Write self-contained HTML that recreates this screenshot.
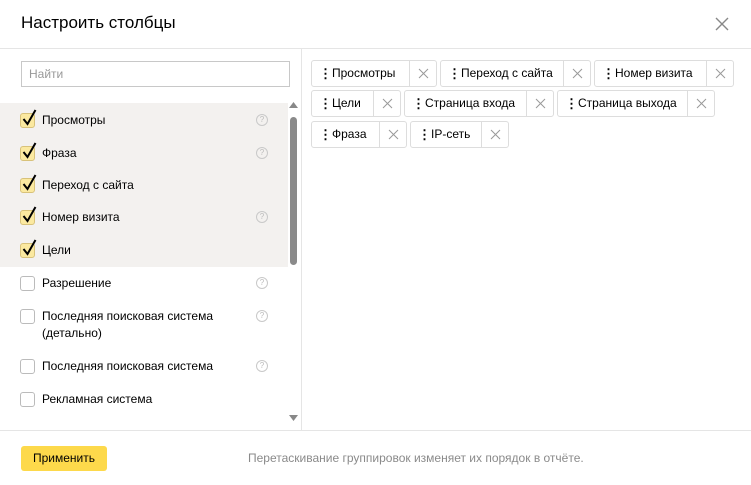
<!DOCTYPE html>
<html><head><meta charset="utf-8"><style>
*{box-sizing:border-box;margin:0;padding:0}
body{width:751px;height:485px;background:#fff;font-family:"Liberation Sans",sans-serif;position:relative;overflow:hidden;color:#000}
.abs{position:absolute}
.title{left:21px;top:13px;font-size:17px}
.close{left:714px;top:16px}
.hl{left:0;top:48px;width:751px;height:1px;background:#e5e5e5}
.vl{left:301px;top:48px;width:1px;height:382px;background:#e5e5e5}
.fl{left:0;top:430px;width:751px;height:1px;background:#e5e5e5}
.search{left:21px;top:61px;width:269px;height:26px;border:1px solid #c8c8c8;font-size:12px;color:#999;padding:5px 7px}
.sel{left:0;top:103px;width:288px;height:164px;background:#f3f1ef}
.row{position:absolute;left:20px;font-size:12px;line-height:17px}
.cb{position:absolute;left:0;top:1px;width:15px;height:15px;border:1px solid #bbb;border-radius:3px;background:#fff}
.cb.on{background:#fbe9a0;border-color:#d8c27a}
.row span.t{position:absolute;left:22px;top:0;white-space:nowrap}
.q{position:absolute;left:236px;top:2px;width:12px;height:12px;border:1px solid #c9c9c9;border-radius:50%;font-size:8px;color:#bbb;text-align:center;line-height:10px}
.sb{left:290px;top:117px;width:7px;height:148px;background:#8a8a8a;border-radius:4px}
.chip{position:absolute;height:27px;border:1px solid #ddd;border-radius:3px;font-size:12px;line-height:25px;background:#fff}
.chip .d{position:absolute;left:7px;top:0;font-weight:bold;font-size:13px}
.chip .n{position:absolute;left:20px;top:0;white-space:nowrap}
.chip .x{position:absolute;right:0;top:0;width:27px;height:25px;border-left:1px solid #ddd}
.btn{left:21px;top:446px;width:86px;height:25px;background:#fdd94b;border-radius:3px;font-size:12px;text-align:center;line-height:25px}
.hint{left:248px;top:451px;font-size:12px;color:#8a8a8a}
.ck{position:absolute;left:2px;top:-3px}
</style></head><body>
<div class="abs title">Настроить столбцы</div>
<svg class="abs close" width="16" height="16" viewBox="0 0 16 16"><path d="M2 2L14 14M14 2L2 14" stroke="#888" stroke-width="1.4"/></svg>
<div class="abs hl"></div><div class="abs vl"></div><div class="abs fl"></div>
<div class="abs search">Найти</div>
<div class="abs sel"></div>
<svg class="abs" style="left:289px;top:102px" width="9" height="7"><path d="M0 6L4.5 0L9 6Z" fill="#888"/></svg>
<svg class="abs" style="left:289px;top:415px" width="9" height="7"><path d="M0 0L4.5 6L9 0Z" fill="#888"/></svg>
<div class="abs sb"></div>

<svg width="0" height="0" style="position:absolute"><defs><symbol id="ck" viewBox="0 0 15 17"><path d="M1.5 10L5.5 15L13.5 1" stroke="#000" stroke-width="2" fill="none"/></symbol></defs></svg>

<div class="row" style="top:112px"><div class="cb on"></div><svg class="ck" width="15" height="17"><use href="#ck"/></svg><span class="t">Просмотры</span><div class="q">?</div></div>
<div class="row" style="top:145px"><div class="cb on"></div><svg class="ck" width="15" height="17"><use href="#ck"/></svg><span class="t">Фраза</span><div class="q">?</div></div>
<div class="row" style="top:177px"><div class="cb on"></div><svg class="ck" width="15" height="17"><use href="#ck"/></svg><span class="t">Переход с сайта</span></div>
<div class="row" style="top:209px"><div class="cb on"></div><svg class="ck" width="15" height="17"><use href="#ck"/></svg><span class="t">Номер визита</span><div class="q">?</div></div>
<div class="row" style="top:242px"><div class="cb on"></div><svg class="ck" width="15" height="17"><use href="#ck"/></svg><span class="t">Цели</span></div>
<div class="row" style="top:275px"><div class="cb"></div><span class="t">Разрешение</span><div class="q">?</div></div>
<div class="row" style="top:308px"><div class="cb"></div><span class="t">Последняя поисковая система<br>(детально)</span><div class="q">?</div></div>
<div class="row" style="top:358px"><div class="cb"></div><span class="t">Последняя поисковая система</span><div class="q">?</div></div>
<div class="row" style="top:391px"><div class="cb"></div><span class="t">Рекламная система</span></div>
<div class="row" style="top:424px;height:6px;overflow:hidden"><div class="cb"></div></div>

<div class="chip" style="left:311px;top:60px;width:126px"><span class="d">⋮</span><span class="n">Просмотры</span><div class="x"><svg width="27" height="25"><path d="M9 8L18 17M18 8L9 17" stroke="#999"/></svg></div></div>
<div class="chip" style="left:440px;top:60px;width:151px"><span class="d">⋮</span><span class="n">Переход с сайта</span><div class="x"><svg width="27" height="25"><path d="M9 8L18 17M18 8L9 17" stroke="#999"/></svg></div></div>
<div class="chip" style="left:594px;top:60px;width:140px"><span class="d">⋮</span><span class="n">Номер визита</span><div class="x"><svg width="27" height="25"><path d="M9 8L18 17M18 8L9 17" stroke="#999"/></svg></div></div>
<div class="chip" style="left:311px;top:90px;width:90px"><span class="d">⋮</span><span class="n">Цели</span><div class="x"><svg width="27" height="25"><path d="M9 8L18 17M18 8L9 17" stroke="#999"/></svg></div></div>
<div class="chip" style="left:404px;top:90px;width:150px"><span class="d">⋮</span><span class="n">Страница входа</span><div class="x"><svg width="27" height="25"><path d="M9 8L18 17M18 8L9 17" stroke="#999"/></svg></div></div>
<div class="chip" style="left:557px;top:90px;width:158px"><span class="d">⋮</span><span class="n">Страница выхода</span><div class="x"><svg width="27" height="25"><path d="M9 8L18 17M18 8L9 17" stroke="#999"/></svg></div></div>
<div class="chip" style="left:311px;top:121px;width:96px"><span class="d">⋮</span><span class="n">Фраза</span><div class="x"><svg width="27" height="25"><path d="M9 8L18 17M18 8L9 17" stroke="#999"/></svg></div></div>
<div class="chip" style="left:410px;top:121px;width:99px"><span class="d">⋮</span><span class="n">IP-сеть</span><div class="x"><svg width="27" height="25"><path d="M9 8L18 17M18 8L9 17" stroke="#999"/></svg></div></div>

<div class="abs btn">Применить</div>
<div class="abs hint">Перетаскивание группировок изменяет их порядок в отчёте.</div>
</body></html>
